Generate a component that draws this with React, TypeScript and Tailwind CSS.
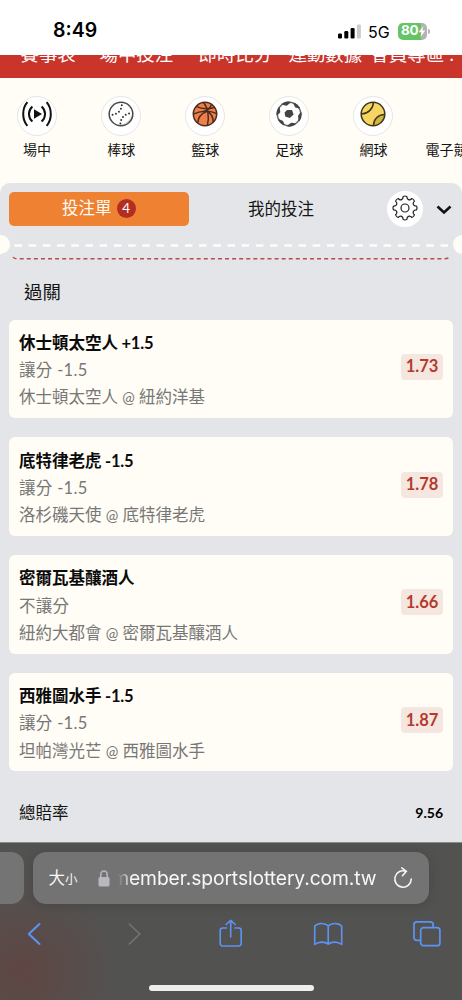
import type { ReactNode } from 'react';

interface IBet {
    pick: string;
    line?: string;
    market: string;
    marketLine?: string;
    away: string;
    home: string;
    odds: string;
}

const bets: IBet[] = [
    {
        pick: '休士頓太空人',
        line: '+1.5',
        market: '讓分',
        marketLine: '-1.5',
        away: '休士頓太空人',
        home: '紐約洋基',
        odds: '1.73'
    },
    {
        pick: '底特律老虎',
        line: '-1.5',
        market: '讓分',
        marketLine: '-1.5',
        away: '洛杉磯天使',
        home: '底特律老虎',
        odds: '1.78'
    },
    {
        pick: '密爾瓦基釀酒人',
        market: '不讓分',
        away: '紐約大都會',
        home: '密爾瓦基釀酒人',
        odds: '1.66'
    },
    {
        pick: '西雅圖水手',
        line: '-1.5',
        market: '讓分',
        marketLine: '-1.5',
        away: '坦帕灣光芒',
        home: '西雅圖水手',
        odds: '1.87'
    }
];

const LiveIcon = () => (
    <svg viewBox="0 0 30 26" className="h-[26px] w-[30px]" fill="none" stroke="#111" strokeWidth="2">
        <path d="M5.4 1.2C-.2 7.600-.2 18.400 5.400 24.800M24.600 1.200c5.600 6.400 5.600 17.200 0 23.600" />
        <path d="M10.400 5.400c-4.600 4.200-4.600 11 0 15.200M19.600 5.400c4.600 4.200 4.600 11 0 15.200" />
        <path d="M12 8.200 20 13l-8 4.800z" fill="#111" stroke="none" />
    </svg>
);

const BaseballIcon = () => (
    <svg viewBox="0 0 26 26" className="size-[26px]" fill="none">
        <circle cx="13" cy="13" r="11.8" fill="#fff" />
        <path d="M24.4 12A11.6 11.6 0 0 1 10 24.2C18 23.5 22 19 24.4 12z" fill="#dcdcdc" />
        <circle cx="13" cy="13" r="11.8" stroke="#4a4a4a" strokeWidth="1.5" />
        <path
            d="M13.8 4.2C13.2 9.600 9.800 13.200 3.800 13.800M12.400 22.600c.6-6 4.200-9.800 10.200-10.400"
            stroke="#333"
            strokeWidth="2"
            strokeLinecap="round"
            strokeDasharray="0 3.6"
        />
    </svg>
);

const BasketballIcon = () => (
    <svg viewBox="0 0 26 26" className="size-[26px]" fill="none" stroke="#4a2c1e" strokeWidth="1.5">
        <circle cx="13" cy="13" r="11.7" fill="#ee7f4b" />
        <path d="M4 5.4c6 2.800 12.400 3.200 18.600.8M1.400 13.200C8 9.600 18 9 24.600 12.600" />
        <path d="M11.600 1.400c4.200 5 6 14.600 3.800 23.200M14.600 10.600C9.200 12.400 6 16.800 5.800 22M15.600 10.400c4 2.600 5.800 6.200 5.600 11" />
        <path d="M19.600 3.200c-1.600 4.200-4.600 6.800-8.600 7.600" />
    </svg>
);

const SoccerIcon = () => (
    <svg viewBox="0 0 26 26" className="size-[26px]">
        <circle cx="13" cy="13" r="11.7" fill="#fff" stroke="#666" strokeWidth="1.5" />
        <path d="M23 17A11 11 0 0 1 14 24c5-2 7-4 9-7z" fill="#ddd" />
        <path d="M11 9h5l1.600 4.400L13.800 17l-4.600-1.400-.6-4z" fill="#444" />
        <path
            d="M6.600 3C9 1.400 12 1 13.600 1.400L10.600 4zM18 2.400c2.400 1 4.200 2.600 5.200 4.400l-3.600-1zM25 12c.2 2.800-.4 5.400-1.800 7.400l-.4-4.400zM19 23c-2.200 1.600-4.600 2.200-7 1.900l3.600-2.500zM7.800 23.600C5.600 22.600 4 21 2.800 19l3.600 1.400zM1.200 13.600c-.1-2.600.6-4.800 1.800-6.800l.6 4.200z"
            fill="#444"
            stroke="#444"
            strokeWidth="1.400"
            strokeLinejoin="round"
        />
    </svg>
);

const TennisIcon = () => (
    <svg viewBox="0 0 26 26" className="size-[26px]" fill="none">
        <circle cx="13" cy="13" r="11.8" fill="#f7d560" />
        <path d="M24.6 14C20 13.4 13.4 18 14 24.6 20 24.4 24.4 20 24.6 14z" fill="#d3b443" />
        <g stroke="#3d3820" strokeWidth="1.5">
            <circle cx="13" cy="13" r="11.8" />
            <path d="M13.4 1.2C13.2 7.6 8.4 12.6 1.4 13M24.6 13.6c-6.6.2-11 4.4-11.2 11" />
        </g>
    </svg>
);

const polar = (deg: number, radius: number) => {
    const rad = (deg * Math.PI) / 180;
    return `${(13 + radius * Math.sin(rad)).toFixed(2)} ${(13 - radius * Math.cos(rad)).toFixed(2)}`;
};

// eight teeth with rounded valleys between them
const gearPath =
    Array.from({ length: 8 }, (_, i) => {
        const a = i * 45;
        return `${i === 0 ? 'M' : 'L'}${polar(a - 9, 11.7)}Q${polar(a, 12.4)} ${polar(a + 9, 11.7)}C${polar(a + 12, 8.4)} ${polar(a + 33, 8.4)} ${polar(a + 36, 11.7)}`;
    }).join('') + 'Z';

const GearIcon = () => (
    <svg viewBox="0 0 26 26" className="size-[26px]" fill="none" stroke="#222" strokeWidth="1.2" strokeLinejoin="round">
        <path d={gearPath} />
        <circle cx="13" cy="13" r="4" />
    </svg>
);

const sports: { label: string; icon: ReactNode }[] = [
    { label: '場中', icon: <LiveIcon /> },
    { label: '棒球', icon: <BaseballIcon /> },
    { label: '籃球', icon: <BasketballIcon /> },
    { label: '足球', icon: <SoccerIcon /> },
    { label: '網球', icon: <TennisIcon /> }
];

const StatusBar = () => (
    <div className="flex h-[55px] shrink-0 items-center bg-white pl-[53px] pt-[7px] font-['Inter','Liberation_Sans',sans-serif] text-black">
        <span className="w-[285px] text-[19.5px] font-semibold leading-none">8:49</span>
        <svg viewBox="0 0 23 15" className="h-[15px] w-[23px]">
            <rect x="0" y="9.5" width="4" height="5" rx="1.2" />
            <rect x="6.3" y="7" width="4" height="7.5" rx="1.2" />
            <rect x="12.6" y="4" width="4" height="10.5" rx="1.2" />
            <rect x="18.9" y="0.5" width="4" height="14" rx="1.2" fill="#ccc" />
        </svg>
        <span className="ml-[7px] w-[30px] pt-px text-[16px] leading-none">5G</span>
        <div className="flex h-[17px] w-[29px] items-center rounded-[5px] bg-linear-to-r from-[#65c466] from-80% to-[#b3b3b3] to-80% pl-[3px]">
            <span className="text-[13.5px] font-bold leading-none tracking-[-0.4px] text-white">80</span>
            <svg viewBox="0 0 8 12" className="h-[11px] w-[8px] shrink-0" fill="#fff">
                <path d="M5.4 0 .4 6.8h3L2.4 12l5.200-7H4.400z" />
            </svg>
        </div>
        <div className="ml-px h-[5px] w-[2px] rounded-r-full bg-[#b3b3b3]" />
    </div>
);

const SiteNav = () => (
    <div className="h-[22.5px] shrink-0 overflow-hidden whitespace-nowrap bg-[#c9342b] text-[18.4px] leading-[26px] text-white">
        <div className="-mt-[14px] flex pl-[20.5px]">
            <span className="w-[79px]">賽事表</span>
            <span className="w-[99px]">場中投注</span>
            <span className="w-[90px]">即時比分</span>
            <span className="w-[82px]">運動數據</span>
            <span className="w-[79px]">會員專區</span>
            <span>.</span>
        </div>
    </div>
);

const SportsMenu = () => (
    <div className="h-[105px] shrink-0 overflow-hidden">
        <div className="-ml-[5px] flex pt-[18.5px]">
            {sports.map((sport) => (
                <div key={sport.label} className="flex w-[84.1px] shrink-0 flex-col items-center">
                    <div className="flex size-[40px] items-center justify-center rounded-full border border-[#e7e6e6] bg-white pb-[5px]">
                        {sport.icon}
                    </div>
                    <span className="mt-[4px] text-[14px] leading-5 text-[#151515]">{sport.label}</span>
                </div>
            ))}
            <span className="ml-[10px] mt-[44px] shrink-0 text-[14px] leading-5 text-[#151515]">電子競技</span>
        </div>
    </div>
);

const SlipTabs = () => (
    <div className="flex h-[52px] shrink-0 items-center pl-[9px]">
        <div className="flex h-[34px] w-[180px] items-center justify-center gap-[5px] rounded-[5px] bg-[#ee8132] text-[16.5px] text-[#fffdf5]">
            投注單
            <span className="flex size-[19.5px] items-center justify-center rounded-full bg-[#b22d22] text-[13.5px]">4</span>
        </div>
        <span className="w-[184px] pt-px text-center text-[16.5px] text-[#151515]">我的投注</span>
        <div className="ml-[14px] flex size-[36px] items-center justify-center rounded-full bg-white pb-[2px]">
            <GearIcon />
        </div>
        <svg viewBox="0 0 16 10" className="ml-[13px] mt-[2px] h-[10px] w-[16px]" fill="none" stroke="#111" strokeWidth="2.6">
            <path d="M1.5 1.5 8 7.5l6.5-6" />
        </svg>
    </div>
);

// perforated edge of the ticket
const TicketEdge = () => (
    <div className="flex h-[30px] shrink-0 items-start overflow-hidden">
        <div className="-ml-[10px] size-[19.5px] shrink-0 rounded-full bg-[#fffdf5]" />
        <svg viewBox="0 0 443 30" className="h-[30px] w-[443px] shrink-0" fill="none">
            <path d="M4.500 10.500H438" stroke="#fffdf5" strokeWidth="2.600" strokeDasharray="7.500 6.700" />
            <path d="M3 22q1 1.800 4 1.800H434.500q4 0 5-2.300" stroke="#bd4b46" strokeWidth="1.500" strokeDasharray="4 3.080" />
        </svg>
        <div className="size-[19.5px] shrink-0 rounded-full bg-[#fffdf5]" />
    </div>
);

const BetCard = ({ bet }: { bet: IBet }) => (
    <div className="flex h-[98.7px] items-center justify-between rounded-[6px] bg-[#fffdf5] pl-[10px] pr-[9.5px]">
        <div className="whitespace-nowrap pt-[4px] text-[16.5px] leading-[27.3px] text-[#777]">
            <div className="font-bold text-[#0b0b0b]">
                {bet.pick}
                {bet.line && <span className="ml-[3.5px] tracking-[-0.2px]">{bet.line}</span>}
            </div>
            <div className="tracking-[0.3px]">
                {bet.market} {bet.marketLine}
            </div>
            <div className="flex">
                {bet.away}
                <span className="w-[21px] text-center text-[15px]">@</span>
                {bet.home}
            </div>
        </div>
        <div className="mb-[4px] flex h-[26px] w-[42px] items-center justify-center rounded-[4px] bg-[#f5e7df] text-[16.5px] font-bold text-[#b33a2d]">
            {bet.odds}
        </div>
    </div>
);

const BetSlip = () => (
    <div className="flex h-[659.5px] shrink-0 flex-col rounded-t-[10px] bg-[#e4e5e8]">
        <SlipTabs />
        <TicketEdge />
        <h2 className="h-[55px] shrink-0 pl-[24px] pt-[14px] text-[18.4px] leading-[26px] text-[#151515]">過關</h2>
        <div className="flex flex-col gap-[19px] pl-[9px] pr-[9.5px]">
            {bets.map((bet) => (
                <BetCard key={bet.pick} bet={bet} />
            ))}
        </div>
        <div className="flex items-center justify-between pl-[19px] pr-[19px] pt-[28px] leading-7 text-[#151515]">
            <span className="text-[16.5px]">總賠率</span>
            <span className="text-[14px] font-bold text-black">9.56</span>
        </div>
    </div>
);

const AddressBar = () => (
    <div className="flex h-[52px] gap-[9.5px]">
        <div className="w-[23.5px] rounded-r-[13px] bg-[#747474]" />
        <div className="flex w-[395.5px] items-center rounded-[13px] bg-[#737373] pl-[15.5px] text-[#f7f7f7] shadow-[0_1px_12px_rgba(0,0,0,0.15)]">
            <div className="flex w-[49px] items-baseline pt-px leading-none">
                <span className="text-[16.5px]">大</span>
                <span className="text-[12.5px]">小</span>
            </div>
            <svg viewBox="0 0 12 17" className="h-[17px] w-[12px]">
                <rect x="0.5" y="7" width="11" height="9.5" rx="1.5" fill="#b9b8be" />
                <path d="M2.8 7.5V4.5a3.2 3.5 0 0 1 6.4 0v3" fill="none" stroke="#b9b8be" strokeWidth="1.5" />
            </svg>
            <div className="ml-[8px] flex w-[259px] justify-end overflow-hidden font-['Inter','Liberation_Sans',sans-serif] text-[19.3px] leading-7 tracking-[-0.1px] [mask-image:linear-gradient(90deg,transparent,black_14px)]">
                member.sportslottery.com.tw
            </div>
            <svg viewBox="0 0 20 24" className="ml-[16px] h-[24px] w-[20px]" fill="none" stroke="#f4f4f4" strokeWidth="1.6" strokeLinecap="round">
                <path d="M12.8 5.3A8.2 8.2 0 1 0 18.2 13" />
                <path d="m8.8 1.8 4.500 3.600-3.800 4.300" />
            </svg>
        </div>
    </div>
);

const BrowserToolbar = () => (
    <div className="flex h-[30px] justify-between pl-[19px] pr-[20.5px] text-[#5e93f5]">
        <svg viewBox="0 0 30 30" className="size-[30px]" fill="none" stroke="currentColor" strokeWidth="2" strokeLinecap="round" strokeLinejoin="round">
            <path d="M20.500 5 9.800 15l10.700 10" />
        </svg>
        <svg viewBox="0 0 30 30" className="size-[30px]" fill="none" stroke="#747474" strokeWidth="1.600" strokeLinecap="round" strokeLinejoin="round">
            <path d="M12.300 5l10.500 10-10.500 10" />
        </svg>
        <svg viewBox="0 0 30 30" className="size-[30px]" fill="none" stroke="currentColor" strokeWidth="1.600" strokeLinecap="round" strokeLinejoin="round">
            <path d="M11.500 9H7.600a2.400 2.400 0 0 0-2.400 2.400v13.200A2.400 2.400 0 0 0 7.600 27h16.200a2.400 2.400 0 0 0 2.400-2.400V11.400A2.400 2.400 0 0 0 23.800 9h-3.900" />
            <path d="M15.700 18V1.300M11.200 5.500l4.500-4.200 4.500 4.200" />
        </svg>
        <svg viewBox="0 0 30 30" className="size-[30px]" fill="none" stroke="currentColor" strokeWidth="1.600" strokeLinejoin="round">
            <path d="M15.200 7v18.200C12.200 22.500 5.700 22.200 1.700 25.500V7.300C4.700 3.500 12 3.700 15.200 7c3.200-3.300 10.500-3.500 13.500.3v18.200c-4-3.300-10.500-3-13.500-.3" />
        </svg>
        <svg viewBox="0 0 30 30" className="size-[30px]" fill="none" stroke="currentColor" strokeWidth="1.700">
            <rect x="8.700" y="8.700" width="19.200" height="18" rx="2.800" />
            <path d="M8.700 21.300H4.800A2.800 2.800 0 0 1 2 18.500V5.600a2.800 2.800 0 0 1 2.800-2.800h13.500a2.800 2.800 0 0 1 2.800 2.800v3.100" />
        </svg>
    </div>
);

const BrowserChrome = () => (
    <div className="flex h-[158px] shrink-0 flex-col border-t border-[#8a8a8b] bg-[#525251] bg-[radial-gradient(circle_at_22px_130px,#5f4643_0px,#525251_95px)] pt-[9px]">
        <AddressBar />
        <div className="mt-[14.5px]">
            <BrowserToolbar />
        </div>
        <div className="ml-[149px] mt-[36px] h-[6.5px] w-[165px] rounded-full bg-[#eee]" />
    </div>
);

const App = () => (
    <div className="flex h-[1000px] w-[462px] flex-col overflow-hidden bg-[#fffdf5] font-['Lato','Noto_Sans_CJK_TC',sans-serif]">
        <StatusBar />
        <SiteNav />
        <SportsMenu />
        <BetSlip />
        <BrowserChrome />
    </div>
);

export default App;
